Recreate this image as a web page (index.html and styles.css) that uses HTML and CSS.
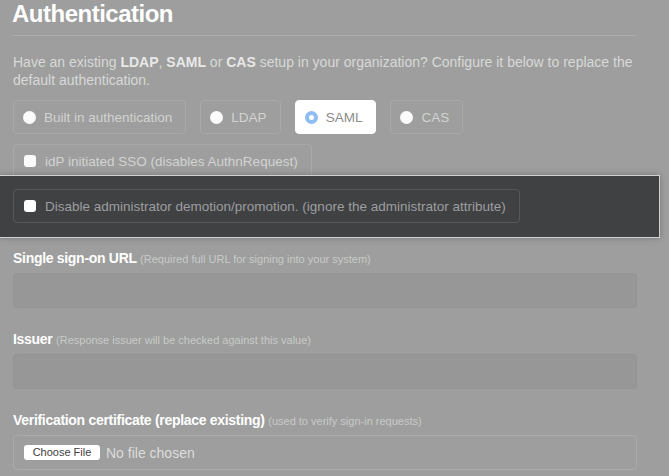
FILE: index.html
```html
<!DOCTYPE html>
<html>
<head>
<meta charset="utf-8">
<link rel="stylesheet" href="styles.css">
</head>
<body>
<div class="page">
  <h1 class="title">Authentication</h1>
  <p class="intro">Have an existing <b>LDAP</b>, <b>SAML</b> or <b>CAS</b> setup in your organization? Configure it below to replace the default authentication.</p>
  <div class="choices">
    <label class="choice"><span class="radio"></span>Built in authentication</label>
    <label class="choice"><span class="radio"></span>LDAP</label>
    <label class="choice selected"><span class="radio"></span>SAML</label>
    <label class="choice"><span class="radio"></span>CAS</label>
  </div>
  <div class="checkrow">
    <label class="choice"><span class="box"></span>idP initiated SSO (disables AuthnRequest)</label>
  </div>
  <div class="spotlight">
    <label class="choice dark"><span class="box"></span>Disable administrator demotion/promotion. (ignore the administrator attribute)</label>
  </div>
  <div class="group">
    <div class="label">Single sign-on URL <span class="hint">(Required full URL for signing into your system)</span></div>
    <div class="input"></div>
  </div>
  <div class="group">
    <div class="label">Issuer <span class="hint">(Response issuer will be checked against this value)</span></div>
    <div class="input"></div>
  </div>
  <div class="group">
    <div class="label">Verification certificate (replace existing) <span class="hint">(used to verify sign-in requests)</span></div>
    <div class="file"><span class="file-btn">Choose File</span><span class="file-name">No file chosen</span></div>
  </div>
</div>
</body>
</html>
```
FILE: styles.css
```css
html, body {
  margin: 0;
  padding: 0;
  background: #9d9e9d;
  overflow: hidden;
}
body {
  font-family: "Liberation Sans", Arial, sans-serif;
  width: 669px;
  height: 476px;
}
.page {
  width: 624px;
  padding: 0 0 0 13px;
}
.title {
  margin: 0;
  font-size: 24px;
  line-height: 28px;
  font-weight: bold;
  color: #ffffff;
  letter-spacing: -0.5px;
  padding-bottom: 7px;
  border-bottom: 1px solid #acadac;
  margin-left: -1px;
}
.intro {
  margin: 17px 0 11px;
  font-size: 14px;
  line-height: 18px;
  color: #d8d9d8;
}
.intro b {
  color: #e8e8e8;
}
.choices {
  display: flex;
  gap: 14px;
}
.choice {
  box-sizing: border-box;
  height: 34px;
  display: inline-flex;
  align-items: center;
  gap: 8px;
  padding: 0 13px 0 9px;
  border: 1px solid #a8a9a8;
  border-radius: 4px;
  font-size: 13.5px;
  color: #d2d3d2;
}
.radio {
  width: 13px;
  height: 13px;
  border-radius: 50%;
  background: #fbfbfb;
  box-sizing: border-box;
}
.choice.selected {
  background: #ffffff;
  border-color: #ffffff;
  color: #8b8c8b;
}
.choice.selected .radio {
  background: #ffffff;
  border: 4px solid #8fbcf2;
}
.checkrow {
  margin-top: 10px;
  display: flex;
}
.box {
  width: 12px;
  height: 12px;
  border-radius: 3px;
  background: #fbfbfb;
  margin-left: 1px;
  margin-right: 1px;
}
.spotlight {
  position: relative;
  margin: -3px -23px 10px -14px;
  padding: 13px 0 14px 13px;
  background: #404143;
  border: 1px solid #cfd0cf;
  box-shadow: 0 0 6px rgba(0, 0, 0, 0.25);
  display: flex;
}
.choice.dark {
  border-color: #56585a;
  color: #9c9ea0;
}
.choice.dark .box {
  background: #ffffff;
}
.group {
  margin-bottom: 21px;
}
.label {
  font-size: 14px;
  line-height: 20px;
  font-weight: bold;
  color: #ffffff;
  letter-spacing: -0.3px;
  margin-bottom: 4px;
}
.hint {
  font-size: 11px;
  font-weight: normal;
  letter-spacing: 0;
  color: #c9cac9;
}
.input {
  box-sizing: border-box;
  height: 35px;
  background: #969796;
  border: 1px solid #929392;
  border-radius: 4px;
}
.file {
  box-sizing: border-box;
  height: 35px;
  border: 1px solid #a9aaa9;
  border-radius: 4px;
  padding-left: 10px;
  display: flex;
  align-items: center;
}
.file-btn {
  box-sizing: border-box;
  height: 15px;
  width: 76px;
  background: #ffffff;
  border-radius: 3px;
  font-size: 11px;
  line-height: 15px;
  color: #404040;
  text-align: center;
}
.file-name {
  margin-left: 6px;
  font-size: 14px;
  color: #dcdddc;
}
```
